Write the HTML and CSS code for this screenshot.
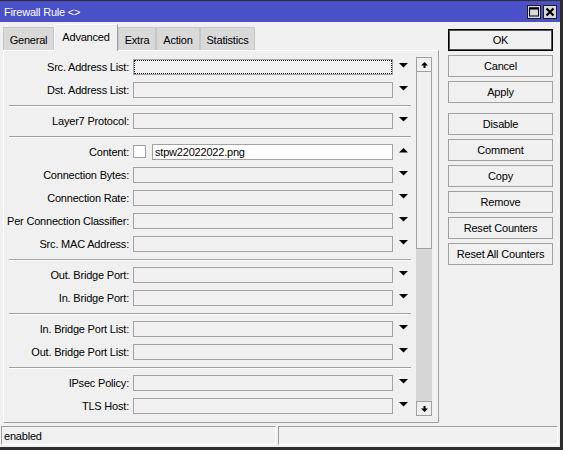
FILE: index.html
```html
<!DOCTYPE html>
<html>
<head>
<meta charset="utf-8">
<title>Firewall Rule</title>
<link rel="stylesheet" href="styles.css">
</head>
<body>
<div class="window">
  <div class="titlebar">
    <span class="title">Firewall Rule &lt;&gt;</span>
    <div class="tb-btns">
      <span class="tb-btn"><svg width="12" height="12" viewBox="0 0 12 12"><rect x="1.5" y="2" width="9" height="8" fill="none" stroke="#000" stroke-width="1"/><rect x="1" y="1.5" width="10" height="2" fill="#000"/></svg></span>
      <span class="tb-btn"><svg width="12" height="12" viewBox="0 0 12 12"><path d="M2.5 2.5 L9.5 9.5 M9.5 2.5 L2.5 9.5" stroke="#000" stroke-width="2.2"/></svg></span>
    </div>
  </div>
  <div class="main">
    <div class="left">
      <div class="tabs">
        <div class="tab w-general">General</div>
        <div class="tab active w-advanced">Advanced</div>
        <div class="tab w-extra">Extra</div>
        <div class="tab w-action">Action</div>
        <div class="tab w-stats">Statistics</div>
      </div>
      <div class="panel">
        <div class="fields">
          <div class="row"><span class="lbl">Src. Address List:</span><span class="field focus"></span><span class="arrow"><svg width="9" height="5" viewBox="0 0 9 5"><polygon points="0,0 9,0 4.5,4.5" fill="#000"/></svg></span></div>
          <div class="row"><span class="lbl">Dst. Address List:</span><span class="field"></span><span class="arrow"><svg width="9" height="5" viewBox="0 0 9 5"><polygon points="0,0 9,0 4.5,4.5" fill="#000"/></svg></span></div>
          <div class="sep"></div>
          <div class="row"><span class="lbl">Layer7 Protocol:</span><span class="field"></span><span class="arrow"><svg width="9" height="5" viewBox="0 0 9 5"><polygon points="0,0 9,0 4.5,4.5" fill="#000"/></svg></span></div>
          <div class="sep"></div>
          <div class="row"><span class="lbl">Content:</span><span class="check"></span><span class="field white narrow">stpw22022022.png</span><span class="arrow"><svg width="9" height="5" viewBox="0 0 9 5"><polygon points="0,4.5 9,4.5 4.5,0" fill="#000"/></svg></span></div>
          <div class="row"><span class="lbl">Connection Bytes:</span><span class="field"></span><span class="arrow"><svg width="9" height="5" viewBox="0 0 9 5"><polygon points="0,0 9,0 4.5,4.5" fill="#000"/></svg></span></div>
          <div class="row"><span class="lbl">Connection Rate:</span><span class="field"></span><span class="arrow"><svg width="9" height="5" viewBox="0 0 9 5"><polygon points="0,0 9,0 4.5,4.5" fill="#000"/></svg></span></div>
          <div class="row"><span class="lbl">Per Connection Classifier:</span><span class="field"></span><span class="arrow"><svg width="9" height="5" viewBox="0 0 9 5"><polygon points="0,0 9,0 4.5,4.5" fill="#000"/></svg></span></div>
          <div class="row"><span class="lbl">Src. MAC Address:</span><span class="field"></span><span class="arrow"><svg width="9" height="5" viewBox="0 0 9 5"><polygon points="0,0 9,0 4.5,4.5" fill="#000"/></svg></span></div>
          <div class="sep"></div>
          <div class="row"><span class="lbl">Out. Bridge Port:</span><span class="field"></span><span class="arrow"><svg width="9" height="5" viewBox="0 0 9 5"><polygon points="0,0 9,0 4.5,4.5" fill="#000"/></svg></span></div>
          <div class="row"><span class="lbl">In. Bridge Port:</span><span class="field"></span><span class="arrow"><svg width="9" height="5" viewBox="0 0 9 5"><polygon points="0,0 9,0 4.5,4.5" fill="#000"/></svg></span></div>
          <div class="sep"></div>
          <div class="row"><span class="lbl">In. Bridge Port List:</span><span class="field"></span><span class="arrow"><svg width="9" height="5" viewBox="0 0 9 5"><polygon points="0,0 9,0 4.5,4.5" fill="#000"/></svg></span></div>
          <div class="row"><span class="lbl">Out. Bridge Port List:</span><span class="field"></span><span class="arrow"><svg width="9" height="5" viewBox="0 0 9 5"><polygon points="0,0 9,0 4.5,4.5" fill="#000"/></svg></span></div>
          <div class="sep"></div>
          <div class="row"><span class="lbl">IPsec Policy:</span><span class="field"></span><span class="arrow"><svg width="9" height="5" viewBox="0 0 9 5"><polygon points="0,0 9,0 4.5,4.5" fill="#000"/></svg></span></div>
          <div class="row"><span class="lbl">TLS Host:</span><span class="field"></span><span class="arrow"><svg width="9" height="5" viewBox="0 0 9 5"><polygon points="0,0 9,0 4.5,4.5" fill="#000"/></svg></span></div>
        </div>
        <div class="scrollbar">
          <div class="sb-btn"><svg width="7" height="6" viewBox="0 0 7 6"><path d="M3.5 0 L7 3.5 H4.5 V6 H2.5 V3.5 H0 Z" fill="#000"/></svg></div>
          <div class="sb-thumb"></div>
          <div class="sb-track"></div>
          <div class="sb-btn"><svg width="7" height="6" viewBox="0 0 7 6"><path d="M3.5 6 L7 2.5 H4.5 V0 H2.5 V2.5 H0 Z" fill="#000"/></svg></div>
        </div>
      </div>
    </div>
    <div class="buttons">
      <div class="btn default">OK</div>
      <div class="btn">Cancel</div>
      <div class="btn">Apply</div>
      <div class="btn spaced">Disable</div>
      <div class="btn">Comment</div>
      <div class="btn">Copy</div>
      <div class="btn">Remove</div>
      <div class="btn">Reset Counters</div>
      <div class="btn">Reset All Counters</div>
    </div>
  </div>
  <div class="status">
    <div class="cell c1">enabled</div>
    <div class="cell c2"></div>
  </div>
</div>
</body>
</html>
```

FILE: styles.css
```css
* { box-sizing: border-box; }
html, body { margin: 0; padding: 0; background: #f0f0f0; }
body {
  font-family: "Liberation Sans", Arial, sans-serif;
  font-size: 11px;
  letter-spacing: -0.2px;
  color: #000;
}
.window {
  width: 563px;
  height: 450px;
  background: #f0f0f0;
  border-top: 1px solid #2e2e2e;
  border-right: 3px solid #2e2e2e;
  border-bottom: 3px solid #2e2e2e;
  display: flex;
  flex-direction: column;
}
.titlebar {
  height: 21px;
  flex: none;
  background: #4a50c8;
  display: flex;
  align-items: center;
  justify-content: space-between;
  padding: 0 3px 0 4px;
}
.title { color: #fff; font-size: 11px; }
.tb-btns { display: flex; gap: 2px; }
.tb-btn {
  width: 14px;
  height: 14px;
  background: #d8d8d8;
  border: 1px solid #1e1e1e;
  display: flex;
  align-items: center;
  justify-content: center;
}
.main {
  height: 401px;
  flex: none;
  display: flex;
}
.left {
  margin-left: 3px;
  margin-top: 2px;
  width: 436px;
  display: flex;
  flex-direction: column;
}
.tabs {
  height: 26px;
  display: flex;
  align-items: flex-end;
}
.tab {
  height: 23px;
  background: #d9d9d9;
  border: 1px solid #c6c6c6;
  border-bottom: none;
  display: flex;
  align-items: center;
  justify-content: center;
  padding-top: 2px;
}
.tab.active {
  height: 27px;
  margin-bottom: -1px;
  background: #f0f0f0;
  border-top: 1px solid #fff;
  border-left: 1px solid #fff;
  border-right: 1px solid #a0a0a0;
  padding-top: 0;
  padding-bottom: 2px;
  position: relative;
  z-index: 1;
}
.w-general { width: 51px; }
.w-advanced { width: 64px; }
.w-extra { width: 38px; }
.w-action { width: 44px; }
.w-stats { width: 55px; }
.panel {
  height: 373px;
  border-top: 1px solid #fff;
  border-left: 1px solid #fff;
  border-right: 1px solid #a0a0a0;
  border-bottom: 1px solid #a0a0a0;
  display: flex;
}
.fields {
  width: 412px;
  padding-top: 5px;
}
.row {
  height: 23px;
  display: flex;
  align-items: flex-start;
}
.lbl {
  width: 125px;
  margin-right: 4px;
  margin-top: 3px;
  height: 16px;
  line-height: 16px;
  text-align: right;
  white-space: nowrap;
}
.field {
  width: 260px;
  height: 16px;
  margin-top: 3px;
  border: 1px solid #a3a3a3;
  background: #f0f0f0;
  line-height: 14px;
  padding-left: 2px;
}
.field.focus {
  outline: 1px dotted #222;
  outline-offset: -2px;
}
.field.white { background: #fff; }
.field.narrow { width: 241px; margin-left: 6px; }
.check {
  width: 13px;
  height: 13px;
  margin-top: 4px;
  background: #fff;
  border: 1px solid #a3a3a3;
}
.arrow {
  width: 23px;
  padding-left: 6px;
  margin-top: 7px;
  display: flex;
}
.sep {
  margin: 3px 0 3px 5px;
  width: 402px;
  height: 2px;
  border-top: 1px solid #a0a0a0;
  border-bottom: 1px solid #fff;
}
.scrollbar {
  width: 16px;
  height: 359px;
  margin-top: 6px;
  display: flex;
  flex-direction: column;
}
.sb-btn {
  height: 15px;
  background: #f0f0f0;
  border: 1px solid #a0a0a0;
  display: flex;
  align-items: center;
  justify-content: center;
}
.sb-thumb {
  height: 177px;
  background: #f0f0f0;
  border-left: 1px solid #a0a0a0;
  border-right: 1px solid #a0a0a0;
  border-bottom: 1px solid #a0a0a0;
}
.sb-track {
  height: 152px;
  background: #d6d6d6;
}
.buttons {
  margin-left: 9px;
  margin-top: 7px;
  width: 105px;
  display: flex;
  flex-direction: column;
}
.btn {
  height: 22px;
  margin-bottom: 4px;
  border: 1px solid #a0a0a0;
  background: #f0f0f0;
  display: flex;
  align-items: center;
  justify-content: center;
}
.btn.default {
  border: 1px solid #000;
  box-shadow: inset 0 0 0 1px #555;
}
.btn.spaced { margin-top: 6px; }
.status {
  height: 19px;
  margin-top: 3px;
  padding: 0 2px 0 1px;
  display: flex;
  gap: 2px;
}
.cell {
  height: 19px;
  border-top: 1px solid #a0a0a0;
  border-left: 1px solid #a0a0a0;
  border-right: 1px solid #fff;
  border-bottom: 1px solid #fff;
  line-height: 18px;
  padding-left: 2px;
}
.c1 { width: 275px; }
.c2 { flex: 1; }
```
